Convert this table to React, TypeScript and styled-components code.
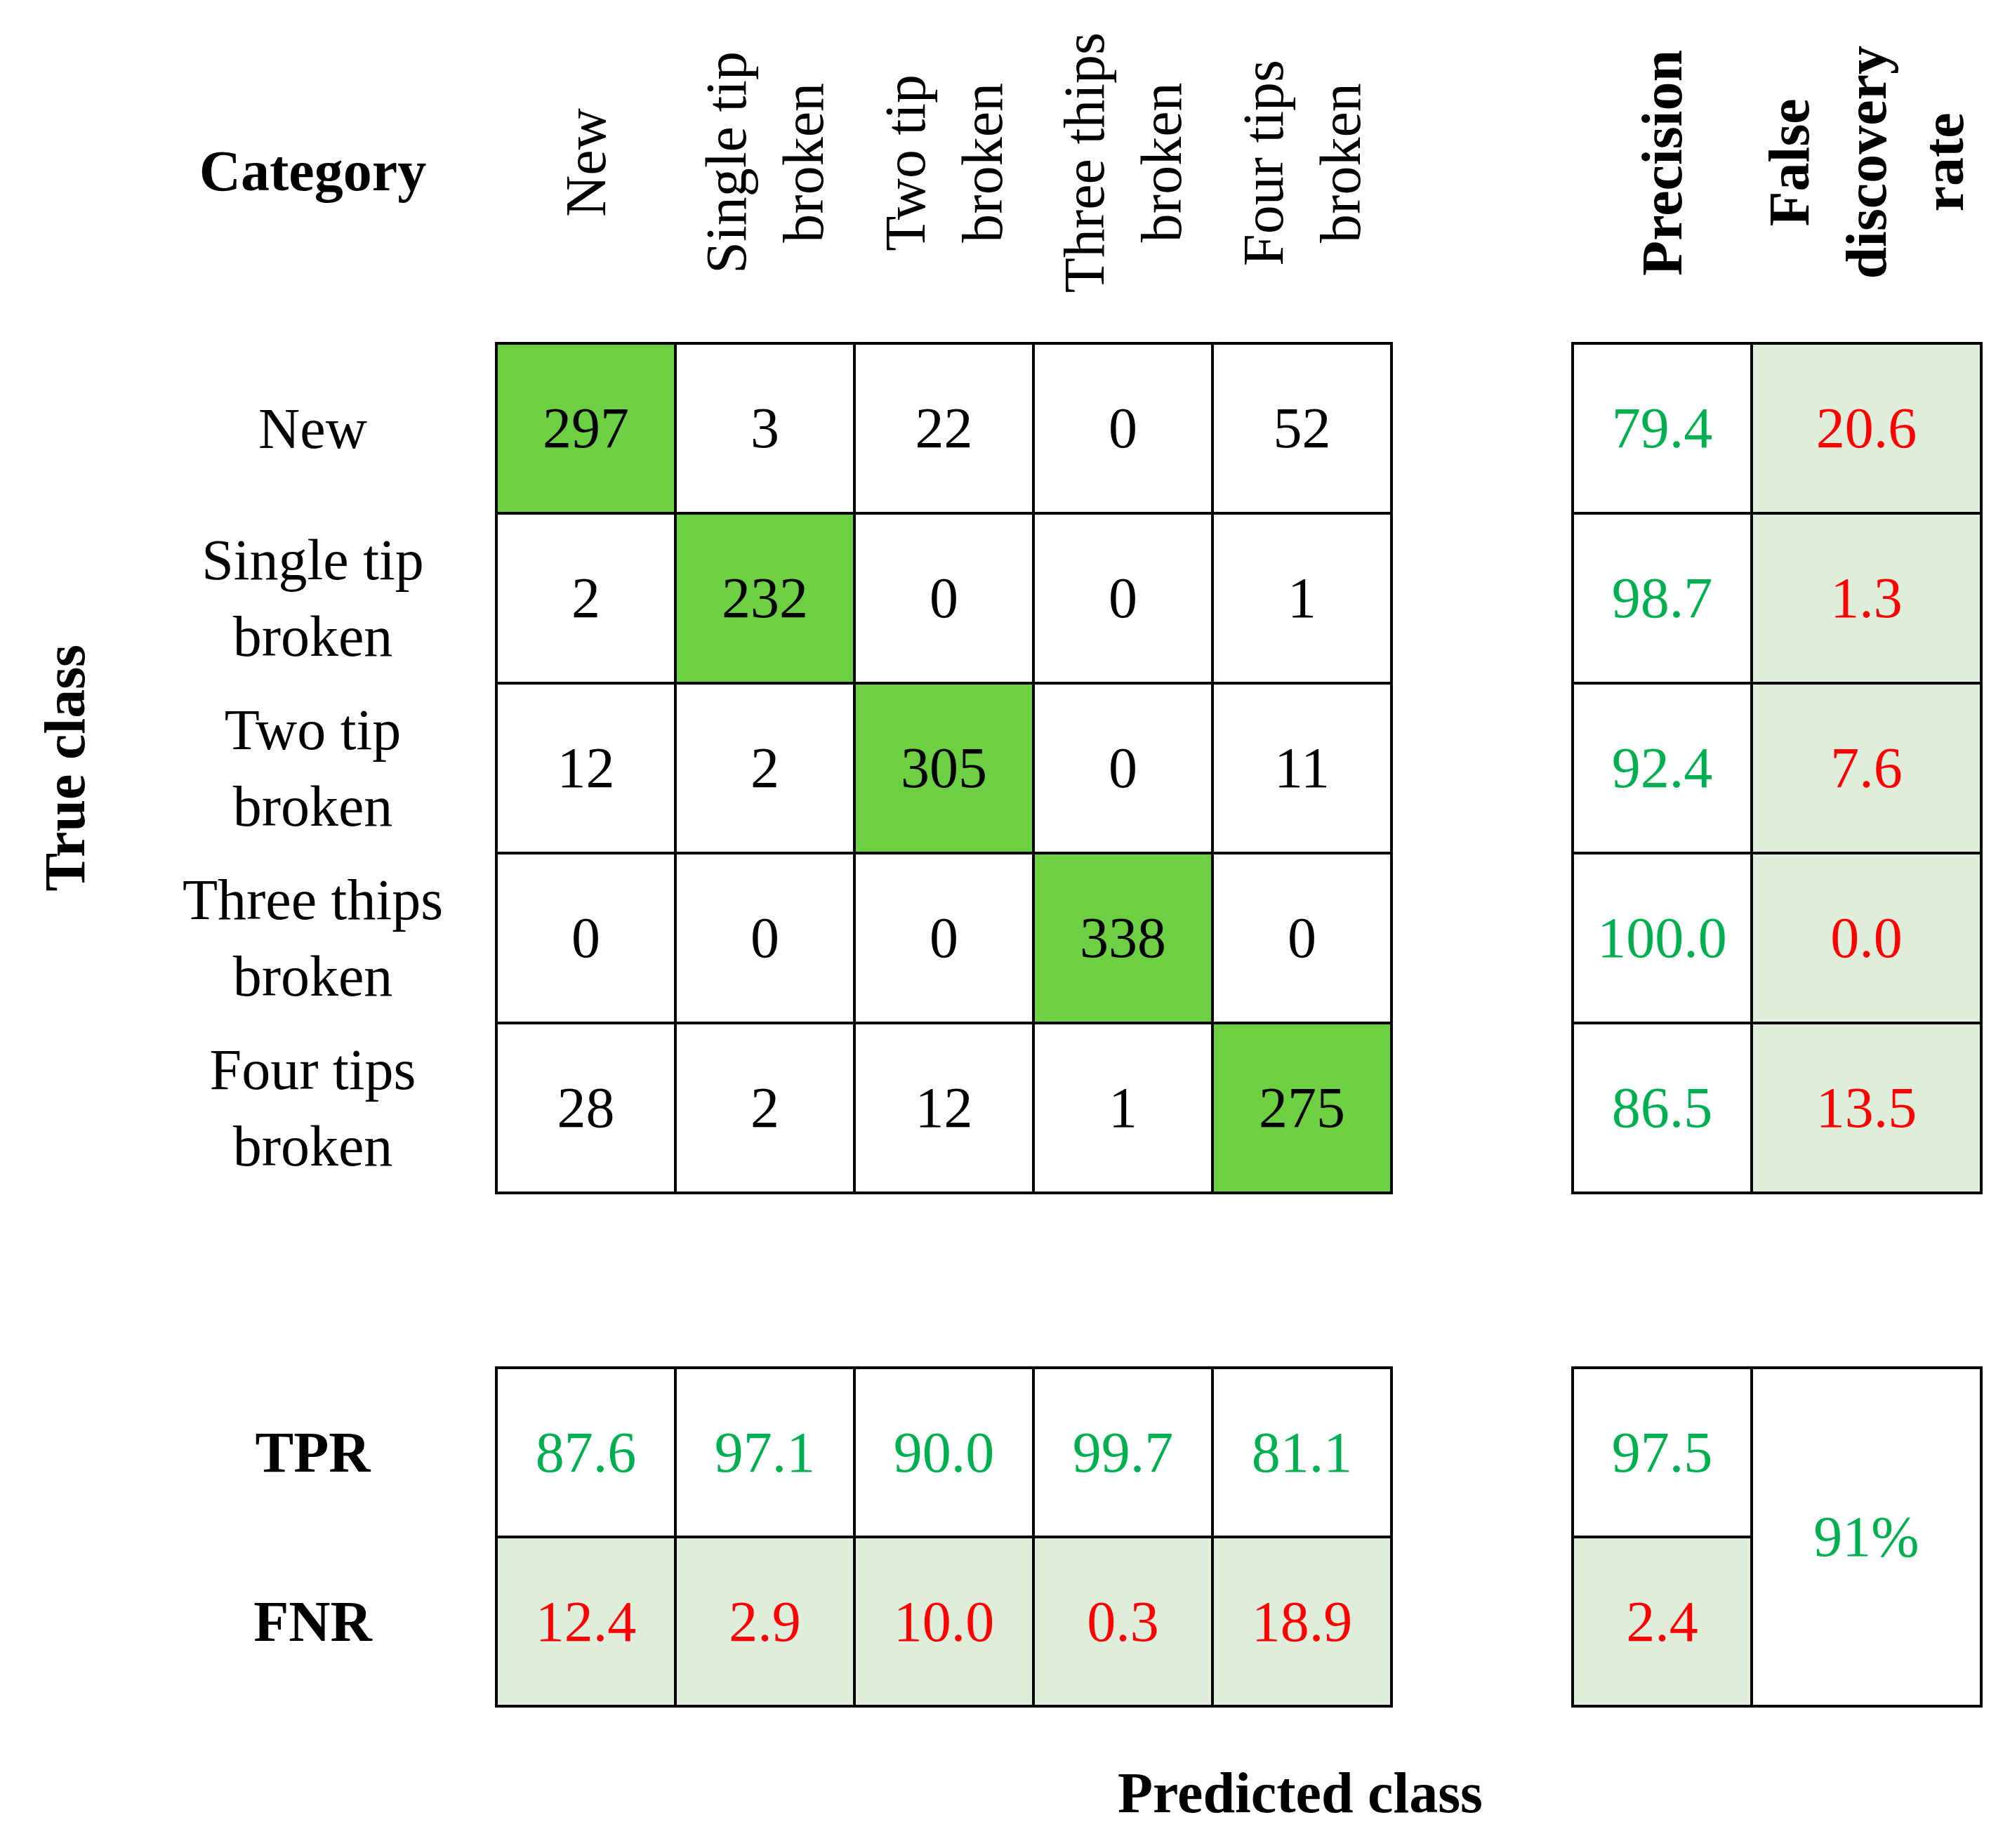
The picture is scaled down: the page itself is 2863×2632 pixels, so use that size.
import React from 'react'
import styled, { createGlobalStyle } from 'styled-components'

const colors = {
  border: '#000000',
  hit: '#6dcf42',
  soft: '#dfeeda',
  good: '#00b050',
  bad: '#ff0000',
}

const GlobalStyle = createGlobalStyle`
  html, body {
    margin: 0;
    padding: 0;
    background: #ffffff;
  }
  body {
    font-family: 'Liberation Serif', 'Times New Roman', serif;
    color: #000000;
  }
`

const Page = styled.div`
  width: 2863px;
  height: 2632px;
  display: flex;
  flex-direction: column;
`

const Row = styled.div<{ $top?: number }>`
  display: flex;
  align-items: stretch;
  margin-top: ${(p) => p.$top ?? 0}px;
`

const AxisCol = styled.div`
  width: 186px;
  flex: none;
  display: flex;
  align-items: center;
  justify-content: center;
`

const LabelCol = styled.div`
  width: 519px;
  flex: none;
  display: flex;
  flex-direction: column;
  gap: 4px;
  padding-top: 4px;
`

const Gutter = styled.div`
  width: 254px;
  flex: none;
`

const Vertical = styled.span<{ $bold?: boolean }>`
  writing-mode: vertical-rl;
  transform: rotate(180deg);
  text-align: center;
  font-size: 82px;
  line-height: 110px;
  font-weight: ${(p) => (p.$bold ? 700 : 400)};
  white-space: nowrap;
`

const HeaderRow = styled(Row)`
  height: 487px;
`

const CategoryCell = styled.div`
  width: 519px;
  flex: none;
  display: flex;
  align-items: center;
  justify-content: center;
  font-size: 82px;
  font-weight: 700;
`

const HeadGroup = styled.div<{ $cols: string }>`
  display: grid;
  grid-template-columns: ${(p) => p.$cols};
  column-gap: 4px;
  padding: 0 4px 24px;
  flex: none;
`

const HeadCell = styled.div`
  display: flex;
  align-items: center;
  justify-content: center;
`

const RowLabel = styled.div<{ $h: number; $bold?: boolean }>`
  height: ${(p) => p.$h}px;
  display: flex;
  align-items: center;
  justify-content: center;
  text-align: center;
  font-size: 82px;
  line-height: 109px;
  font-weight: ${(p) => (p.$bold ? 700 : 400)};
`

const Table = styled.div<{ $cols: string; $rows: string }>`
  display: grid;
  grid-template-columns: ${(p) => p.$cols};
  grid-template-rows: ${(p) => p.$rows};
  gap: 4px;
  border: 4px solid ${colors.border};
  background: ${colors.border};
  flex: none;
  align-self: flex-start;
`

type Fill = 'hit' | 'soft' | 'plain'
type Tone = 'ink' | 'good' | 'bad'

const Cell = styled.div<{ $fill?: Fill; $tone?: Tone; $span?: number }>`
  display: flex;
  align-items: center;
  justify-content: center;
  font-size: 82px;
  background: ${(p) =>
    p.$fill === 'hit' ? colors.hit : p.$fill === 'soft' ? colors.soft : '#ffffff'};
  color: ${(p) =>
    p.$tone === 'good' ? colors.good : p.$tone === 'bad' ? colors.bad : '#000000'};
  grid-row: ${(p) => (p.$span ? `span ${p.$span}` : 'auto')};
`

const AxisTitle = styled.div`
  padding-left: 1592px;
  font-size: 82px;
  font-weight: 700;
  white-space: nowrap;
`

const classes = [
  ['New'],
  ['Single tip', 'broken'],
  ['Two tip', 'broken'],
  ['Three thips', 'broken'],
  ['Four tips', 'broken'],
]

const matrix = [
  [297, 3, 22, 0, 52],
  [2, 232, 0, 0, 1],
  [12, 2, 305, 0, 11],
  [0, 0, 0, 338, 0],
  [28, 2, 12, 1, 275],
]

const precision = ['79.4', '98.7', '92.4', '100.0', '86.5']
const fdr = ['20.6', '1.3', '7.6', '0.0', '13.5']
const tpr = ['87.6', '97.1', '90.0', '99.7', '81.1']
const fnr = ['12.4', '2.9', '10.0', '0.3', '18.9']

const Lines = ({ lines }: { lines: string[] }) => (
  <>
    {lines.map((l, i) => (
      <React.Fragment key={i}>
        {i > 0 && <br />}
        {l}
      </React.Fragment>
    ))}
  </>
)

const App = () => {
  return (
    <Page>
      <GlobalStyle />
      <HeaderRow>
        <AxisCol />
        <CategoryCell>Category</CategoryCell>
        <HeadGroup $cols="repeat(5, 251px)">
          {classes.map((c, i) => (
            <HeadCell key={i}>
              <Vertical>
                <Lines lines={c} />
              </Vertical>
            </HeadCell>
          ))}
        </HeadGroup>
        <Gutter />
        <HeadGroup $cols="251px 323px">
          <HeadCell>
            <Vertical $bold>Precision</Vertical>
          </HeadCell>
          <HeadCell>
            <Vertical $bold>
              <Lines lines={['False', 'discovery', 'rate']} />
            </Vertical>
          </HeadCell>
        </HeadGroup>
      </HeaderRow>

      <Row>
        <AxisCol>
          <Vertical $bold>True class</Vertical>
        </AxisCol>
        <LabelCol>
          {classes.map((c, i) => (
            <RowLabel key={i} $h={238}>
              <span>
                <Lines lines={c} />
              </span>
            </RowLabel>
          ))}
        </LabelCol>
        <Table $cols="repeat(5, 251px)" $rows="repeat(5, 238px)">
          {matrix.map((row, r) =>
            row.map((v, c) => (
              <Cell key={`${r}-${c}`} $fill={r === c ? 'hit' : 'plain'}>
                {v}
              </Cell>
            )),
          )}
        </Table>
        <Gutter />
        <Table $cols="251px 323px" $rows="repeat(5, 238px)">
          {precision.map((p, i) => (
            <React.Fragment key={i}>
              <Cell $tone="good">{p}</Cell>
              <Cell $fill="soft" $tone="bad">
                {fdr[i]}
              </Cell>
            </React.Fragment>
          ))}
        </Table>
      </Row>

      <Row $top={245}>
        <AxisCol />
        <LabelCol>
          <RowLabel $h={237} $bold>
            TPR
          </RowLabel>
          <RowLabel $h={237} $bold>
            FNR
          </RowLabel>
        </LabelCol>
        <Table $cols="repeat(5, 251px)" $rows="repeat(2, 237px)">
          {tpr.map((v, i) => (
            <Cell key={`t${i}`} $tone="good">
              {v}
            </Cell>
          ))}
          {fnr.map((v, i) => (
            <Cell key={`f${i}`} $fill="soft" $tone="bad">
              {v}
            </Cell>
          ))}
        </Table>
        <Gutter />
        <Table $cols="251px 323px" $rows="repeat(2, 237px)">
          <Cell $tone="good">97.5</Cell>
          <Cell $tone="good" $span={2}>
            91%
          </Cell>
          <Cell $fill="soft" $tone="bad">
            2.4
          </Cell>
        </Table>
      </Row>

      <Row $top={75}>
        <AxisTitle>Predicted class</AxisTitle>
      </Row>
    </Page>
  )
}

export default App
